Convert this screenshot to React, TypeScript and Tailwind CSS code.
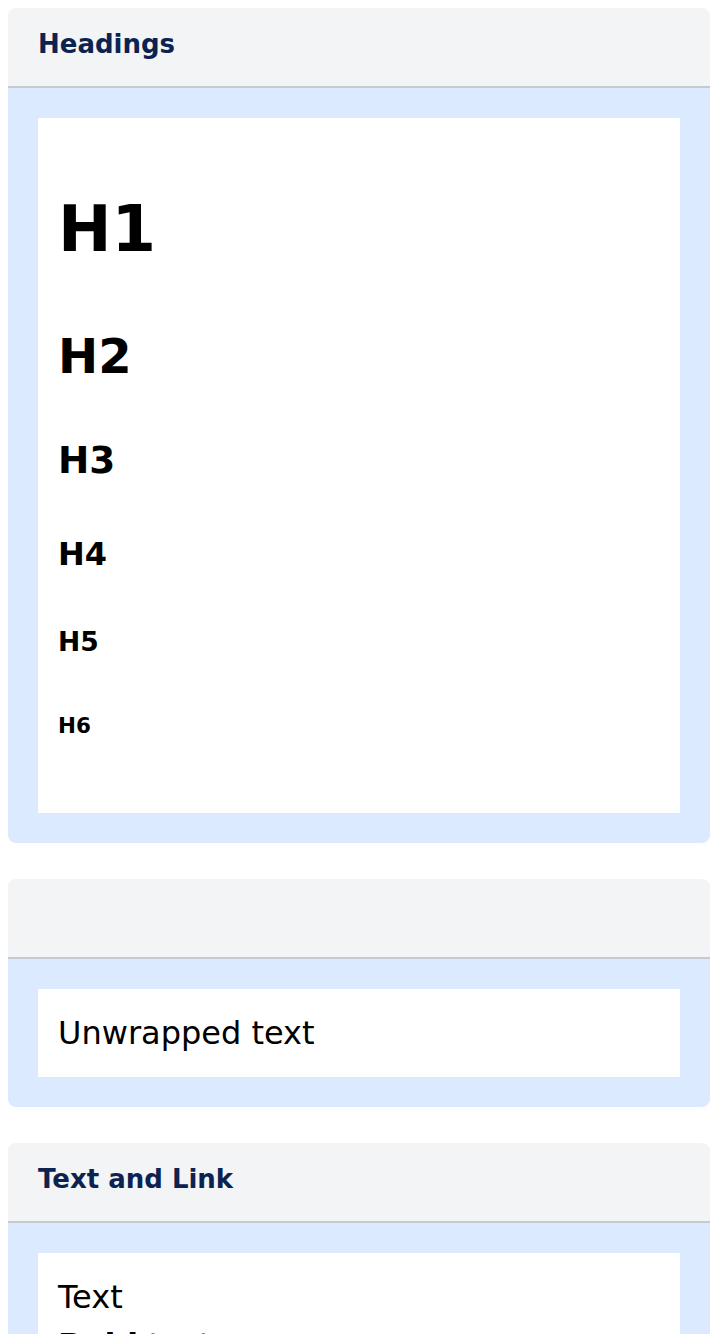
const font = "font-['DejaVu_Sans',sans-serif]";

function Section({ title, children }: { title?: string; children: React.ReactNode }) {
  return (
    <section className="overflow-hidden rounded-lg">
      <div className="h-[78px] bg-[#f3f4f6] px-[30px] pt-[17px]">
        {title && (
          <h2 className="text-[26px] font-bold leading-[1.5] text-[#0c2352]">{title}</h2>
        )}
      </div>
      <div className="border-t-2 border-[#c5c9d2] bg-[#dbeafe] p-[30px]">
        <div className="bg-white p-5">{children}</div>
      </div>
    </section>
  );
}

export default function App() {
  return (
    <div className={`${font} flex flex-col gap-9 bg-white p-2 text-[32px] leading-[1.5] text-black`}>
      <Section title="Headings">
        <div className="flow-root font-bold">
          <h1 className="my-[42.88px] text-[64px]">H1</h1>
          <h2 className="my-[39.84px] text-[48px]">H2</h2>
          <h3 className="my-[37.44px] text-[37.44px]">H3</h3>
          <h4 className="my-[42.56px] text-[32px]">H4</h4>
          <h5 className="my-[43.5px] text-[26.56px]">H5</h5>
          <h6 className="mt-[48px] mb-[51px] text-[21.44px]">H6</h6>
        </div>
      </Section>

      <Section>
        <p className="whitespace-nowrap">Unwrapped text</p>
      </Section>

      <Section title="Text and Link">
        <p>Text</p>
        <p>
          <b className="font-bold">Bold</b> text
        </p>
        <p>
          <a className="text-blue-700 underline">Link</a>
        </p>
      </Section>
    </div>
  );
}
